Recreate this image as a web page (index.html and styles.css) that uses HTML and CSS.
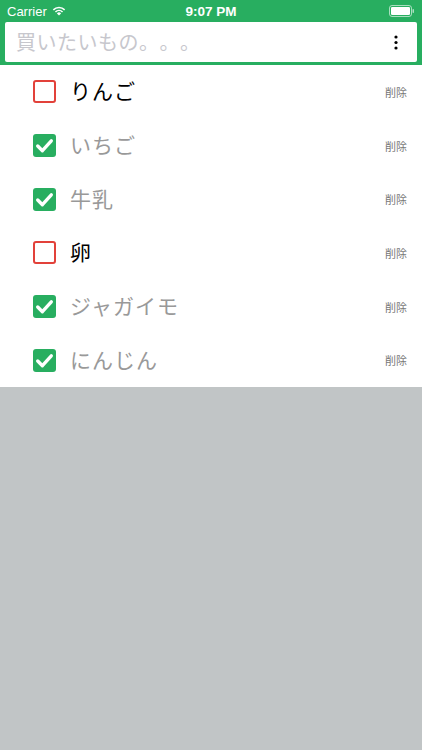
FILE: index.html
```html
<!DOCTYPE html>
<html lang="ja">
<head>
<meta charset="utf-8">
<link rel="stylesheet" href="styles.css">
</head>
<body>
<div class="app">
  <header class="header">
    <div class="status">
      <div class="status-left">
        <span class="carrier">Carrier</span>
        <svg class="wifi" width="14" height="10" viewBox="0 0 14 10">
          <path d="M7 9.6 L4.9 7.4 A3 3 0 0 1 9.1 7.4 Z" fill="#fff"/>
          <path d="M2.9 5.4 A5.8 5.8 0 0 1 11.1 5.4 L10 6.5 A4.3 4.3 0 0 0 4 6.5 Z" fill="#fff"/>
          <path d="M0.8 3.3 A8.8 8.8 0 0 1 13.2 3.3 L12.1 4.4 A7.3 7.3 0 0 0 1.9 4.4 Z" fill="#fff"/>
        </svg>
      </div>
      <span class="time">9:07 PM</span>
      <div class="status-right">
        <svg width="26" height="12" viewBox="0 0 26 12">
          <rect x="0.5" y="0.5" width="22" height="11" rx="2.5" fill="none" stroke="#fff" stroke-opacity="0.6"/>
          <rect x="2" y="2" width="19" height="8" rx="1.3" fill="#fff"/>
          <rect x="23.5" y="4" width="1.5" height="4" rx="0.7" fill="#fff" fill-opacity="0.6"/>
        </svg>
      </div>
    </div>
    <div class="search">
      <span class="placeholder">買いたいもの。。。</span>
      <svg class="more" width="4" height="15" viewBox="0 0 4 15">
        <circle cx="2" cy="2" r="1.6" fill="#000"/>
        <circle cx="2" cy="7.5" r="1.6" fill="#000"/>
        <circle cx="2" cy="13" r="1.6" fill="#000"/>
      </svg>
    </div>
  </header>
  <ul class="list">
    <li class="item">
      <span class="box box-off"></span>
      <span class="label">りんご</span>
      <span class="del">削除</span>
    </li>
    <li class="item done">
      <span class="box box-on"><svg width="22" height="22" viewBox="0 0 22 22"><path d="M4.5 11.5 L9 16 L17.5 6.5" fill="none" stroke="#fff" stroke-width="3.2" stroke-linecap="round" stroke-linejoin="round"/></svg></span>
      <span class="label">いちご</span>
      <span class="del">削除</span>
    </li>
    <li class="item done">
      <span class="box box-on"><svg width="22" height="22" viewBox="0 0 22 22"><path d="M4.5 11.5 L9 16 L17.5 6.5" fill="none" stroke="#fff" stroke-width="3.2" stroke-linecap="round" stroke-linejoin="round"/></svg></span>
      <span class="label">牛乳</span>
      <span class="del">削除</span>
    </li>
    <li class="item">
      <span class="box box-off"></span>
      <span class="label">卵</span>
      <span class="del">削除</span>
    </li>
    <li class="item done">
      <span class="box box-on"><svg width="22" height="22" viewBox="0 0 22 22"><path d="M4.5 11.5 L9 16 L17.5 6.5" fill="none" stroke="#fff" stroke-width="3.2" stroke-linecap="round" stroke-linejoin="round"/></svg></span>
      <span class="label">ジャガイモ</span>
      <span class="del">削除</span>
    </li>
    <li class="item done">
      <span class="box box-on"><svg width="22" height="22" viewBox="0 0 22 22"><path d="M4.5 11.5 L9 16 L17.5 6.5" fill="none" stroke="#fff" stroke-width="3.2" stroke-linecap="round" stroke-linejoin="round"/></svg></span>
      <span class="label">にんじん</span>
      <span class="del">削除</span>
    </li>
  </ul>
  <div class="rest"></div>
</div>
</body>
</html>
```
FILE: styles.css
```css
* { box-sizing: border-box; }
html, body { margin: 0; padding: 0; }
body {
  width: 422px;
  height: 750px;
  background: #c1c5c6;
  font-family: "Noto Sans CJK JP", "Noto Sans", sans-serif;
  overflow: hidden;
  text-spacing-trim: space-all;
}
.app { display: flex; flex-direction: column; height: 750px; }
.header {
  background: #28ae60;
  padding: 0 5px 3px 5px;
}
.status {
  height: 22px;
  display: flex;
  align-items: center;
  justify-content: space-between;
  color: #fff;
  font-family: "Liberation Sans", Arial, sans-serif;
}
.status-left { display: flex; align-items: center; gap: 5px; padding-left: 2px; width: 90px; }
.carrier { font-size: 13px; }
.wifi { margin-top: -1px; }
.time { font-size: 13.5px; font-weight: bold; }
.status-right { width: 90px; display: flex; justify-content: flex-end; padding-right: 2px; }
.search {
  background: #fff;
  height: 40px;
  border-radius: 2px;
  display: flex;
  align-items: center;
  justify-content: space-between;
  padding: 0 19px 0 11px;
}
.placeholder {
  color: #c7c7cd;
  font-size: 20px;
  letter-spacing: 0.5px;
  text-spacing-trim: space-all;
  font-feature-settings: "fwid" 1;
  padding-bottom: 2px;
}
.more { display: block; }
.list {
  list-style: none;
  margin: 0;
  padding: 0;
  background: #fff;
}
.item {
  height: 53.7px;
  display: flex;
  align-items: center;
  padding: 0 15px 0 33px;
}
.box {
  width: 23px;
  height: 23px;
  border-radius: 3px;
  flex: none;
}
.box svg { display: block; width: 23px; height: 23px; }
.box-off { border: 2px solid #e2413a; }
.box-on { background: #28ae60; }
.label {
  flex: 1;
  margin-left: 14px;
  font-size: 21px;
  color: #000;
  letter-spacing: 1px;
  padding-bottom: 3px;
}
.done .label { color: #999; }
.del {
  font-size: 11px;
  color: #777;
}
.rest { flex: 1; }
```
